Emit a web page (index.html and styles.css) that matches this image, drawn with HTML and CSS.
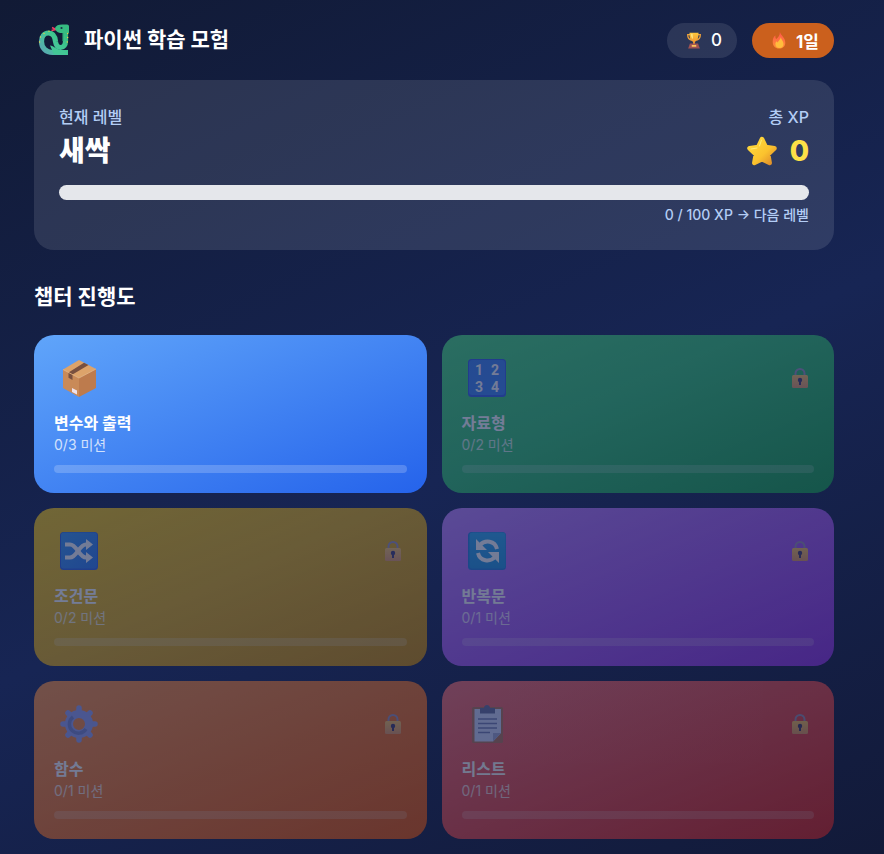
FILE: index.html
```html
<!DOCTYPE html>
<html lang="ko">
<head>
<meta charset="utf-8">
<meta name="viewport" content="width=device-width, initial-scale=1">
<title>파이썬 학습 모험</title>
<link rel="stylesheet" href="styles.css">
</head>
<body>
<svg class="defs" aria-hidden="true">
  <defs>
    <linearGradient id="lockBody" x1="0" y1="0" x2="0" y2="1"><stop offset="0" stop-color="#fbc35c"/><stop offset="1" stop-color="#e59a62"/></linearGradient>
    <linearGradient id="tile" x1="0" y1="0" x2="1" y2="1"><stop offset="0" stop-color="#3b9cf5"/><stop offset="1" stop-color="#2f7bee"/></linearGradient>
    <linearGradient id="tileCyan" x1="0" y1="0" x2="0" y2="1"><stop offset="0" stop-color="#2ea8ee"/><stop offset="1" stop-color="#2296e0"/></linearGradient>
    <symbol id="lock" viewBox="0 0 18 22">
      <path d="M4.500 10V6.500a4.500 4.500 0 0 1 9 0V10" fill="none" stroke="#9c92b8" stroke-width="2"/>
      <rect x="1" y="8" width="16" height="13" rx="1.500" fill="url(#lockBody)"/>
      <circle cx="9" cy="13" r="2.200" fill="#433b6b"/><path d="M8 13h2v5H8z" fill="#433b6b"/>
    </symbol>
  </defs>
</svg>
<main class="page">
  <header class="header">
    <div class="brand">
      <svg class="brand-icon" viewBox="0 0 32 32" aria-hidden="true">
        <defs><linearGradient id="snake" gradientUnits="userSpaceOnUse" x1="3" y1="28" x2="28" y2="6"><stop offset="0" stop-color="#5aa6b4"/><stop offset=".5" stop-color="#43c795"/><stop offset="1" stop-color="#33b87d"/></linearGradient></defs>
        <path d="M18 5.500 14 3.500M18 5.500 13.500 6.500" stroke="#f13c62" stroke-width="1.400" fill="none"/>
        <path d="M27.500 6v11c0 4-2 6.500-5 6.500S18 21 17.500 17.500C17 12.500 15 9 10.500 9 6 9 3.500 13 3.500 17.500 3.500 24 8 28.500 14.500 28.500H30" fill="none" stroke="url(#snake)" stroke-width="5.200"/>
        <path d="M12 21.500c4 0 6 4.500 12 4.500l6 4.500H16z" fill="#43c795"/>
        <path d="M17 4c1-2.500 3.500-3.500 7-3.500h5c1.500 0 2 1 2 2v6.500h-7.500C20 9 17.500 7.500 17 4z" fill="#36bb81"/>
        <path d="M24.800 9v8" stroke="#268966" stroke-width="1"/>
        <circle cx="23.500" cy="4" r="1.100" fill="#17334b"/>
        <g fill="#f2cf43"><circle cx="29.700" cy="9.500" r=".7"/><circle cx="29.700" cy="13.500" r=".7"/><circle cx="29.300" cy="18" r=".7"/><circle cx="11" cy="7.300" r=".7"/><circle cx="6" cy="9.500" r=".7"/><circle cx="2.500" cy="13" r=".7"/><circle cx="1.600" cy="18" r=".7"/></g>
      </svg>
      <h1 class="brand-title">파이썬 학습 모험</h1>
    </div>
    <div class="badges">
      <div class="badge">
        <svg class="badge-icon" viewBox="0 0 18 20" aria-hidden="true">
          <defs><linearGradient id="cup" x1="0" y1="0" x2="0" y2="1"><stop offset="0" stop-color="#ffc83d"/><stop offset="1" stop-color="#ef8d31"/></linearGradient></defs>
          <path d="M5 4H2c0 4 1 5.500 4 6M13 4h3c0 4-1 5.500-4 6" fill="none" stroke="#eba03c" stroke-width="1.500"/>
          <path d="M4 2h10c0 6-1 9-4 10v3H8v-3C5 11 4 8 4 2z" fill="url(#cup)"/>
          <path d="M5.500 3h2l.5 6C6 8 5.500 6 5.500 3z" fill="#ffe27a"/>
          <path d="M4.500 14h9l2 5.500h-13z" fill="#a05252"/><rect x="6.500" y="15.500" width="5" height="2" fill="#fbc35c"/>
        </svg>
        <span>0</span>
      </div>
      <div class="badge badge-streak">
        <svg class="badge-icon" viewBox="0 0 18 20" aria-hidden="true">
          <defs><linearGradient id="fire" x1="0" y1="0" x2="0" y2="1"><stop offset="0" stop-color="#ff554d"/><stop offset="1" stop-color="#ff9136"/></linearGradient></defs>
          <path d="M10 1c1 4 6 6 6 12 0 4-3 6.500-7 6.500S2 17 2 12c0-3 1-6 3-7 0 2 0 3 1 4 2-2 4-4 4-8z" fill="url(#fire)"/>
          <path d="M11 7c.5 3 3 4 3 7.500 0 3-2 4.500-4.500 4.500S5 17.500 5 14.500C5 13 6 12 6.500 11.500 7 13 7.500 13 8 12c1-1.500 2.500-2.500 3-5z" fill="#ffbd3c"/>
        </svg>
        <span>1일</span>
      </div>
    </div>
  </header>

  <section class="level-panel">
    <div class="level-row">
      <div>
        <p class="level-label">현재 레벨</p>
        <p class="level-value">새싹</p>
      </div>
      <div class="level-xp">
        <p class="level-label">총 XP</p>
        <p class="level-value xp-value">
          <svg class="star" viewBox="0 0 32 32" aria-hidden="true">
            <defs><linearGradient id="starFill" x1="0" y1="0" x2="1" y2="1"><stop offset="0" stop-color="#ffdc3e"/><stop offset=".6" stop-color="#fbc22e"/><stop offset="1" stop-color="#dd8a2a"/></linearGradient></defs>
            <path d="M16 4l3.800 8 8.700 1.300-6.300 6 1.500 8.700L16 24.200 8.300 28l1.500-8.700-6.300-6L12.200 12z" fill="url(#starFill)" stroke="url(#starFill)" stroke-width="4.500" stroke-linejoin="round"/>
            <path d="M13.500 11 15.500 5M5 14l6-1" fill="none" stroke="#ffed78" stroke-width="1" stroke-linecap="round"/>
          </svg>
          <span>0</span>
        </p>
      </div>
    </div>
    <div class="level-track" role="progressbar" aria-valuenow="0" aria-valuemin="0" aria-valuemax="100" aria-label="XP"></div>
    <p class="level-next">0 / 100 XP → 다음 레벨</p>
  </section>

  <h2 class="section-title">챕터 진행도</h2>

  <div class="chapters">
    <button type="button" class="chapter blue">
      <span class="chapter-top">
        <svg class="chapter-icon" viewBox="0 0 40 40" aria-hidden="true">
          <path d="M20 2 37 11 20 20 4 11.500z" fill="#dda36a"/>
          <path d="M4 11.500 20 20v19L4 30z" fill="#c98a58"/><path d="M37 11 20 20v19l17-9z" fill="#bd7b4d"/>
          <path d="M25 4.700 29.500 7 13.500 16.500v5.500l-4-2.200v-5.400z" fill="#79503f"/>
          <path d="M13 30l5 2.500v4L13 34z" fill="#eee1ec"/>
          <path d="M4 11.500 20 20l17-9" fill="none" stroke="#edb67e" stroke-width=".8"/>
        </svg>
      </span>
      <span class="chapter-name">변수와 출력</span>
      <span class="chapter-count">0/3 미션</span>
      <span class="chapter-track"></span>
    </button>

    <button type="button" class="chapter green" disabled>
      <span class="chapter-top">
        <svg class="chapter-icon" viewBox="0 0 40 40" aria-hidden="true">
          <rect x="1" y="1" width="38" height="38" rx="3.500" fill="#3560e8"/><rect x="2" y="2" width="36" height="35" rx="3" fill="#3c85f5"/>
          <g class="tile-digits"><text x="12" y="17">1</text><text x="28" y="17">2</text><text x="12" y="34">3</text><text x="28" y="34">4</text></g>
        </svg>
        <svg class="chapter-lock" aria-hidden="true"><use href="#lock"/></svg>
      </span>
      <span class="chapter-name">자료형</span>
      <span class="chapter-count">0/2 미션</span>
      <span class="chapter-track"></span>
    </button>

    <button type="button" class="chapter yellow" disabled>
      <span class="chapter-top">
        <svg class="chapter-icon" viewBox="0 0 40 40" aria-hidden="true">
          <rect x="1" y="1" width="38" height="38" rx="3.500" fill="#3166e5"/><rect x="2" y="1.500" width="36" height="36" rx="3" fill="url(#tile)"/>
          <path d="M6 13.500h5c7 0 9 13 16 13h2M6 26.500h5c7 0 9-13 16-13h2" fill="none" stroke="#fff" stroke-width="4"/>
          <path d="M27 8l7 5.500-7 5.500zM27 21l7 5.500-7 5.500z" fill="#fff"/>
        </svg>
        <svg class="chapter-lock" aria-hidden="true"><use href="#lock"/></svg>
      </span>
      <span class="chapter-name">조건문</span>
      <span class="chapter-count">0/2 미션</span>
      <span class="chapter-track"></span>
    </button>

    <button type="button" class="chapter purple" disabled>
      <span class="chapter-top">
        <svg class="chapter-icon" viewBox="0 0 40 40" aria-hidden="true">
          <rect x="1" y="1" width="38" height="38" rx="3.500" fill="#2480dd"/><rect x="2.500" y="1.500" width="36" height="36" rx="3" fill="url(#tileCyan)"/>
          <path d="M13 14c5-5.500 15-4.500 17 4M28 26c-5 5.500-15 4.500-17-4" fill="none" stroke="#fff" stroke-width="4"/>
          <path d="M9 8v11h11zM32 32V21H21z" fill="#fff"/>
        </svg>
        <svg class="chapter-lock" aria-hidden="true"><use href="#lock"/></svg>
      </span>
      <span class="chapter-name">반복문</span>
      <span class="chapter-count">0/1 미션</span>
      <span class="chapter-track"></span>
    </button>

    <button type="button" class="chapter orange" disabled>
      <span class="chapter-top">
        <svg class="chapter-icon" viewBox="0 0 40 40" aria-hidden="true">
          <path d="M20 4v6M20 30v6M4 20h6M30 20h6M9 9l4 4M27 27l4 4M31 9l-4 4M13 27l-4 4" stroke="#98a2ee" stroke-width="5.500" stroke-linecap="round"/>
          <circle cx="20" cy="20" r="10" fill="none" stroke="#98a2ee" stroke-width="8"/>
          <path d="M14 13a9 9 0 1 0 13 12" fill="none" stroke="#7986c8" stroke-width="3.500"/>
        </svg>
        <svg class="chapter-lock" aria-hidden="true"><use href="#lock"/></svg>
      </span>
      <span class="chapter-name">함수</span>
      <span class="chapter-count">0/1 미션</span>
      <span class="chapter-track"></span>
    </button>

    <button type="button" class="chapter red" disabled>
      <span class="chapter-top">
        <svg class="chapter-icon" viewBox="0 0 40 40" aria-hidden="true">
          <rect x="5" y="3" width="31" height="36" rx="1.500" fill="#b9785a"/>
          <path d="M7.500 5H34v24l-8 8.500H7.500z" fill="#d3dcff"/><path d="M26 37.500V29h8z" fill="#a3acd8"/>
          <path d="M13 4h4c0-4 6-4 6 0h5v5.500H13z" fill="#69729f"/>
          <path d="M11 15h19M11 19.500h19M11 24h19M11 28.500h12" stroke="#7580b8" stroke-width="1.500"/>
        </svg>
        <svg class="chapter-lock" aria-hidden="true"><use href="#lock"/></svg>
      </span>
      <span class="chapter-name">리스트</span>
      <span class="chapter-count">0/1 미션</span>
      <span class="chapter-track"></span>
    </button>
  </div>
</main>
</body>
</html>
```
FILE: styles.css
```css
* { box-sizing: border-box; margin: 0; }

body {
  min-height: 100vh;
  color: #fff;
  font-family: Inter, "Noto Sans CJK KR", sans-serif;
  background: linear-gradient(155deg, #111a35, #172554 54%, #121a39);
}

.defs { position: absolute; width: 0; height: 0; }

.page { padding: 20px 50px 15px 34px; }

.header,
.brand,
.badges,
.badge { display: flex; align-items: center; }

.header { justify-content: space-between; height: 40px; }
.brand { gap: 14px; padding-left: 4px; }
.brand-icon { width: 32px; height: 32px; }
.brand-title { font-size: 21px; line-height: 32px; font-weight: 700; }

.badges { gap: 15px; }
.badge {
  gap: 8px;
  height: 35px;
  padding: 0 15px 0 18px;
  border-radius: 18px;
  background: rgba(255, 255, 255, 0.1);
  font-size: 17px;
  font-weight: 500;
}
.badge-streak { background: #cb601d; font-weight: 700; }
.badge-icon { width: 18px; height: 18px; }

.level-panel {
  margin-top: 20px;
  padding: 25px;
  border-radius: 20px;
  background: rgba(255, 255, 255, 0.11);
}
.level-row { display: flex; justify-content: space-between; }
.level-xp { text-align: right; }
.level-label {
  font-size: 16px;
  line-height: 25px;
  font-weight: 500;
  color: #b3cdf5;
}
.level-value { font-size: 28px; line-height: 42px; font-weight: 800; }
.xp-value {
  display: flex;
  align-items: center;
  justify-content: flex-end;
  gap: 12px;
  color: #fde047;
}
.star { width: 32px; height: 32px; }
.level-track {
  height: 15px;
  margin-top: 13px;
  border-radius: 8px;
  background: #e5e7eb;
}
.level-next {
  margin-top: 5px;
  font-size: 14px;
  line-height: 20px;
  font-weight: 500;
  text-align: right;
  color: #b3cdf5;
}

.section-title {
  margin: 31px 0 22px;
  font-size: 21px;
  line-height: 32px;
  font-weight: 700;
}

.chapters {
  display: grid;
  grid-template-columns: 1fr 1fr;
  gap: 15px;
}
.chapter {
  display: flex;
  flex-direction: column;
  padding: 20px;
  border: 0;
  border-radius: 20px;
  color: #fff;
  font-family: inherit;
  text-align: left;
}
.chapter:disabled { opacity: 0.4; }
.chapter-top {
  display: flex;
  align-items: center;
  justify-content: space-between;
  height: 46px;
  margin-bottom: 11px;
  padding: 0 5px;
}
.chapter-icon { width: 40px; height: 40px; }
.chapter-lock { width: 18px; height: 22px; }
.chapter-name { font-size: 16px; line-height: 22px; font-weight: 700; }
.chapter-count { font-size: 14px; line-height: 22px; opacity: 0.75; }
.chapter-track {
  height: 8px;
  margin-top: 9px;
  border-radius: 4px;
  background: rgba(255, 255, 255, 0.2);
}
.tile-digits {
  fill: #fff;
  font-family: Roboto, sans-serif;
  font-size: 14px;
  font-weight: 700;
  text-anchor: middle;
}

.blue { background: linear-gradient(to bottom right, #60a5fa, #2563eb); }
.green { background: linear-gradient(to bottom right, #4ade80, #16a34a); }
.yellow { background: linear-gradient(to bottom right, #facc15, #ca8a04); }
.purple { background: linear-gradient(to bottom right, #c084fc, #9333ea); }
.orange { background: linear-gradient(to bottom right, #fb923c, #ea580c); }
.red { background: linear-gradient(to bottom right, #f87171, #dc2626); }
```
